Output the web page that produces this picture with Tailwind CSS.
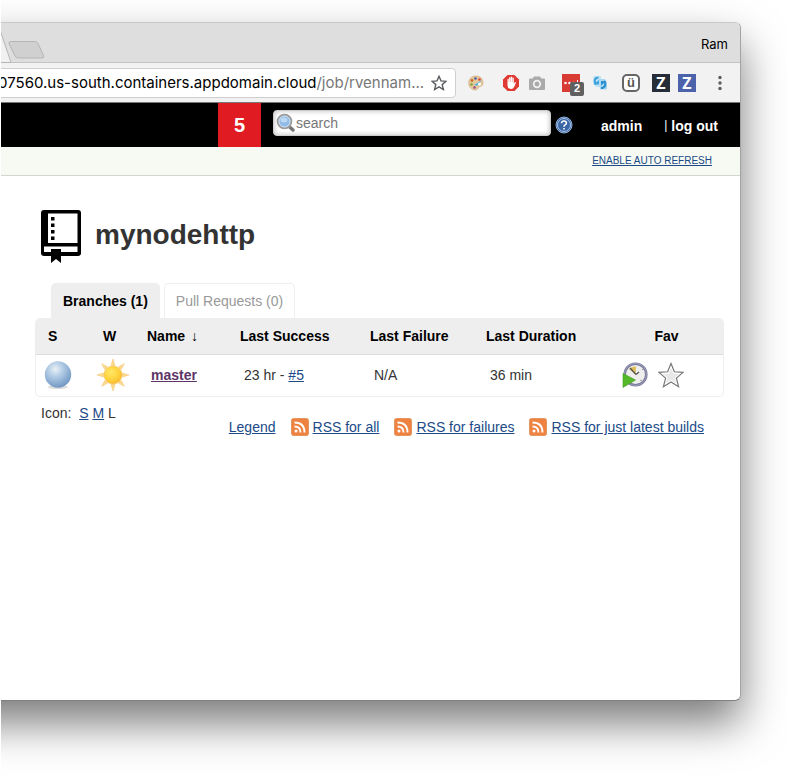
<!DOCTYPE html>
<html lang="en">
<head>
    <meta charset="UTF-8">
    <meta name="viewport" content="width=device-width, initial-scale=1.0">
    <title>mynodehttp [Jenkins]</title>
    <script src="https://cdn.jsdelivr.net/npm/@tailwindcss/browser@4"></script>
</head>
<body class="bg-white font-['Liberation_Sans',Arial,sans-serif] text-sm text-[#333]">
<div class="ml-px h-screen overflow-hidden pt-[22px] pr-[46px] pb-[74px]">
    <!-- Browser window, runs past the left edge -->
    <div class="-ml-24 flex h-full flex-col overflow-hidden rounded-md border border-l-0 border-t-[#c8c8c8] border-r-[#a3a3a3] border-b-[#808080] bg-white pl-24 shadow-[0_22px_44px_rgba(0,0,0,0.52)]">

        <!-- Tab strip -->
        <div class="-ml-24 flex h-10 shrink-0 items-center justify-between border-b border-[#c3c3c3] bg-[#dedede] pl-24">
            <svg class="h-10 w-12" viewBox="0 0 48 40" fill="none" stroke="#b5b5b5">
                <path d="M-2 4L10 39.500H-2z" fill="#f1f1f1"/>
                <path d="M9.500 18.500H34q2 0 3 2l5.500 12q1 2.500-1.500 2.500H17q-2 0-3-2L8 20.500q-.5-2 1.500-2z" fill="#d0d0d0"/>
            </svg>
            <span class="pt-1 pr-3 font-[Inter,sans-serif] text-[13px] text-black">Ram</span>
        </div>

        <!-- Address bar -->
        <div class="-ml-24 flex h-10 shrink-0 items-center border-b border-[#777] bg-[#f2f2f2] pr-4 pl-24">
            <div class="-ml-2 flex h-[30px] w-[463px] shrink-0 items-center justify-between rounded-sm border border-[#cfcfcf] bg-white pr-2 pl-1 font-[Inter,sans-serif] text-[15px] whitespace-nowrap text-black">
                <span>07560.us-south.containers.appdomain.cloud<span class="text-[#777]">/job/rvennam...</span></span>
                <svg class="size-4" viewBox="0 0 16 16" fill="none" stroke="#5a5d62" stroke-width="1.4"><path d="M8 1.300l2 4.600 5 .4-3.800 3.300 1.200 4.900L8 11.900l-4.400 2.600 1.200-4.900L1 6.300l5-.4z"/></svg>
            </div>
            <div class="flex grow items-center gap-3 pl-3">
                <svg class="size-4" viewBox="0 0 16 16">
                    <path d="M8 1C3 1 .5 4.500.7 8.500.9 12.500 4 15 7.500 15c2.500 0 2-2 3.500-3s4-.5 4-4C15 3.500 12 1 8 1z" fill="#e6c99a" stroke="#c9a878" stroke-width=".6"/>
                    <circle cx="4" cy="5.500" r="1.400" fill="#c96b2c"/><circle cx="7.500" cy="3.500" r="1.300" fill="#4a5cae"/><circle cx="11.500" cy="4.500" r="1.300" fill="#d8453c"/><circle cx="3.500" cy="9.500" r="1.300" fill="#7aa63c"/><circle cx="6.500" cy="12.500" r="1.300" fill="#a04a8a"/>
                    <path d="M14 5L6 10l3 1z" fill="#5fb3dc"/><circle cx="11.500" cy="9" r="1.500" fill="#fff"/>
                </svg>
                <div class="ml-1.5 flex items-center gap-2">
                    <svg class="size-[18px]" viewBox="0 0 18 18">
                        <path d="M5.500 1h7L17 5.500v7L12.500 17h-7L1 12.500v-7z" fill="#e03a35"/>
                        <path d="M5.500 9V5.200q.7-.9 1.300 0V8h.3V3.600q.7-.9 1.400 0V8h.3V3q.7-.8 1.400 0v5h.3V4q.7-.9 1.300 0v5.800l1-1.600q.9-.6 1.200.3l-1.600 4Q11 15 9.200 15 5.500 15 5.500 11.500z" fill="#fff"/>
                    </svg>
                    <svg class="size-[18px]" viewBox="0 0 18 18">
                        <path d="M6 2.500h6l1.300 2H16q1 0 1 1V15q0 1-1 1H2q-1 0-1-1V5.500q0-1 1-1h2.700z" fill="#aaa"/>
                        <circle cx="9" cy="10" r="3.300" fill="none" stroke="#f2f2f2" stroke-width="1.700"/>
                    </svg>
                </div>
                <div class="relative ml-1 size-[18px] bg-[#d83b34]">
                    <svg class="size-[18px]" viewBox="0 0 18 18" fill="#fff"><circle cx="3.500" cy="9" r="1.300"/><circle cx="7.500" cy="9" r="1.300"/><circle cx="11.500" cy="9" r="1.300"/><path d="M15 6h1v5h-1z"/></svg>
                    <span class="absolute top-2 left-2 flex h-[14px] w-[14px] items-center justify-center rounded-xs bg-[#606060] text-[11px] font-bold text-white">2</span>
                </div>
                <svg class="size-4" viewBox="0 0 16 16">
                    <path d="M1.500 1H9v3L6.500 6 8 9v3H4L1 8z" fill="#bfe3f6"/>
                    <path d="M7 4h6l2 4v6.500H8z" fill="#a9d8f2"/>
                    <path d="M6.500 2.500C2.500 2.500 1.500 6.500 4 9.500" fill="none" stroke="#3ea2dc" stroke-width="2.200"/>
                    <path d="M1.500 9.500H7V5z" fill="#3ea2dc"/>
                    <path d="M9 13c4.500 0 5.500-4 3-7" fill="none" stroke="#2f8fd0" stroke-width="2.200"/>
                    <path d="M14.500 6H9v4.500z" fill="#2f8fd0"/>
                </svg>
                <span class="ml-0.5 flex size-[18px] items-center justify-center rounded-[5px] border-2 border-[#666] bg-white text-[13px] leading-none font-bold text-[#555]">ü</span>
                <div class="flex gap-2">
                    <span class="flex size-[18px] items-center justify-center bg-[#252d38] font-['Open_Sans',sans-serif] text-base font-bold text-white">Z</span>
                    <span class="flex size-[18px] items-center justify-center bg-[#4c62aa] font-['Open_Sans',sans-serif] text-base font-bold text-white">Z</span>
                </div>
                <svg class="ml-auto h-4 w-2" viewBox="0 0 8 16" fill="#5a5d62"><circle cx="4" cy="2.500" r="1.700"/><circle cx="4" cy="8" r="1.700"/><circle cx="4" cy="13.500" r="1.700"/></svg>
            </div>
        </div>

        <!-- Jenkins header -->
        <header class="-ml-24 flex h-11 shrink-0 items-center justify-end bg-black pr-[22px] pl-24 font-bold text-white">
            <a href="#" class="flex h-11 w-[43px] items-center justify-center bg-[#e01b22] text-xl">5</a>
            <div class="mb-1 ml-3 flex h-[26px] w-[278px] items-center rounded-sm border border-[#ccc] bg-white shadow-[inset_0_0_5px_#bbb]">
                <svg class="ml-0.5 size-5 shrink-0" viewBox="0 0 20 20">
                    <path d="M12.500 13l4.500 4" stroke="#777" stroke-width="3.500" stroke-linecap="round"/>
                    <circle cx="8.500" cy="8.500" r="6.800" fill="#8bb4e0" stroke="#999" stroke-width="2"/>
                    <circle cx="8.500" cy="8.500" r="5.500" fill="#8fb9e6" stroke="#dbe8f5"/>
                    <ellipse cx="8" cy="7" rx="3.500" ry="2.500" fill="#bcd8f3"/>
                </svg>
                <input type="text" aria-label="Search" placeholder="search" class="min-w-0 grow text-sm font-normal text-[#333] outline-none placeholder:text-[#777]">
            </div>
            <a href="#" aria-label="Help" class="ml-1">
                <svg class="size-[18px]" viewBox="0 0 18 18">
                    <circle cx="9" cy="9" r="8" fill="#3a66a5" stroke="#8fb0dc" stroke-width="1"/>
                    <circle cx="9" cy="9" r="6.500" fill="none" stroke="#c3d5ee" stroke-width=".8"/>
                    <path d="M6.500 7.200Q6.700 5 9 5t2.400 2q0 1.200-1.300 1.900Q9 9.500 9 10.700M9 12v1.600" fill="none" stroke="#fff" stroke-width="1.600"/>
                </svg>
            </a>
            <a href="#" class="ml-7 pt-0.5">admin</a>
            <span class="ml-[22px] text-xs font-normal">|</span>
            <a href="#" class="ml-1 pt-0.5">log out</a>
        </header>
        <div class="-ml-24 flex h-[29px] shrink-0 items-center justify-end border-b border-[#d3d7cf] bg-[#f6faf2] pr-7">
            <a href="#" class="text-[10px] text-[#204a87] underline">ENABLE AUTO REFRESH</a>
        </div>

        <main class="pt-[34px] pr-4 pl-[34px]">
            <div class="flex items-start gap-3.5 pl-1.5">
                <svg class="h-[53px] w-10" viewBox="0 0 40 53">
                    <path d="M3 0h34q3 0 3 3v40q0 3-3 3H3q-3 0-3-3V3q0-3 3-3z"/>
                    <path d="M7 3.500h29.500V33H7zM3 36.500h33.500V42H20v-2H10v2H3z" fill="#fff"/>
                    <path d="M10 39h10v14l-5-4-5 4zM10 7h3.500v3.500H10zM10 13.500h3.500V17H10zM10 20h3.500v3.500H10zM10 26.500h3.500V30H10z"/>
                </svg>
                <h1 class="pt-[9px] text-[28px] leading-8 font-bold">mynodehttp</h1>
            </div>

            <div class="mt-5 flex gap-1 pl-4">
                <a href="#" class="flex h-[35px] items-center rounded-t-[5px] bg-[#eee] px-3 font-bold text-black">Branches (1)</a>
                <a href="#" class="flex h-[35px] items-center rounded-t-[5px] border border-b-0 border-[#eee] px-[11px] text-[#999]">Pull Requests (0)</a>
            </div>

            <div class="overflow-hidden rounded-[5px] border border-[#eee]">
                <table class="w-full table-fixed text-left">
                    <colgroup>
                        <col class="w-[55px]"><col class="w-11"><col class="w-[93px]"><col class="w-[130px]"><col class="w-[116px]"><col class="w-[136px]"><col>
                    </colgroup>
                    <thead>
                        <tr class="h-[35px] border-b border-[#ddd] bg-[#eee] text-black">
                            <th class="pl-3">S</th>
                            <th class="pl-3">W</th>
                            <th class="pl-3">Name <span class="pl-0.5 font-normal">↓</span></th>
                            <th class="pl-3">Last Success</th>
                            <th class="pl-3">Last Failure</th>
                            <th class="pl-3">Last Duration</th>
                            <th class="text-center">Fav</th>
                        </tr>
                    </thead>
                    <tbody>
                        <tr class="h-[42px]">
                            <td class="pl-2">
                                <svg class="size-7" viewBox="0 0 28 28" role="img" aria-label="Success">
                                    <defs><radialGradient id="ball" cx=".4" cy=".3" r=".7"><stop offset="0" stop-color="#e9f1f6"/><stop offset=".45" stop-color="#adc8e3"/><stop offset="1" stop-color="#7398c4"/></radialGradient></defs>
                                    <ellipse cx="14" cy="26" rx="10" ry="2" fill="#ddd"/>
                                    <circle cx="14" cy="13.500" r="13.200" fill="url(#ball)"/>
                                </svg>
                            </td>
                            <td class="pl-1.5">
                                <svg class="size-8" viewBox="0 0 32 32" role="img" aria-label="100%">
                                    <defs><radialGradient id="sun" cx=".4" cy=".35" r=".7"><stop offset="0" stop-color="#ffe766"/><stop offset=".6" stop-color="#ffd23c"/><stop offset="1" stop-color="#f8b62d"/></radialGradient></defs>
                                    <path d="M16 0l2 6.500h-4zM16 32l2-6.500h-4zM0 16l6.500-2v4zM32 16l-6.500-2v4zM4.700 4.700l6 3.200-2.800 2.800zM27.300 4.700l-3.200 6-2.800-2.800zM4.700 27.300l3.200-6 2.800 2.800zM27.300 27.300l-6-3.200 2.800-2.800z" fill="#fbd98c" stroke="#f6cf84" stroke-width=".7"/>
                                    <circle cx="16" cy="16" r="9" fill="url(#sun)" stroke="#f5be4a" stroke-width=".6"/>
                                </svg>
                            </td>
                            <td class="pl-4"><a href="#" class="font-bold text-[#5c3566] underline">master</a></td>
                            <td class="pl-4">23 hr - <a href="#" class="text-[#204a87] underline">#5</a></td>
                            <td class="pl-4">N/A</td>
                            <td class="pl-4">36 min</td>
                            <td class="pl-3">
                                <div class="flex items-center gap-2.5">
                                    <a href="#" aria-label="Schedule a build">
                                        <svg class="size-[26px]" viewBox="0 0 26 26">
                                            <circle cx="13.500" cy="12.500" r="10.800" fill="#eeeeec" stroke="#77779a" stroke-width="2.600"/>
                                            <circle cx="13.500" cy="12.500" r="11" fill="none" stroke="#aaaac5" stroke-width=".8"/>
                                            <path d="M13.500 12.500L7 7q3-3 7-2.500z" fill="#e0bd55"/>
                                            <path d="M8 6l6 6.500M14 12.500l3-2.500" stroke="#555" stroke-width="1.300"/>
                                            <path d="M18 18l2 1M20 8l1-1" stroke="#999"/>
                                            <path d="M1 11.500L13.500 18 1 25.500z" fill="#53b928" stroke="#3f9a20" stroke-width=".6"/>
                                        </svg>
                                    </a>
                                    <a href="#" aria-label="Favorite">
                                        <svg class="size-[26px]" viewBox="0 0 26 26">
                                            <path d="M13 1.500l3.400 8.300 8.600.6-6.600 5.700 2.200 8.600L13 20l-7.600 4.700 2.200-8.600L1 10.400l8.600-.6z" fill="#fff" stroke="#777" stroke-width="1.200"/>
                                            <path d="M13 6l2.300 5.500 5.700.5-4.400 3.800 1.500 5.500-5.100-3.200-5.100 3.200 1.500-5.500L5 12l5.700-.5z" fill="#e8e8e8"/>
                                        </svg>
                                    </a>
                                </div>
                            </td>
                        </tr>
                    </tbody>
                </table>
            </div>

            <div class="flex items-start justify-between pt-1.5 pr-5 pl-1.5 whitespace-nowrap">
                <div>Icon: &nbsp;<a href="#" class="text-[#204a87] underline">S</a> <a href="#" class="text-[#204a87] underline">M</a> L</div>
                <div class="flex gap-[15px] pt-3.5 text-[#204a87]">
                    <a href="#" class="underline">Legend</a>
                    <a href="#" class="flex items-center gap-1 underline">
                        <svg class="size-[18px]" viewBox="0 0 18 18"><rect x=".5" y=".5" width="17" height="17" rx="2" fill="#ee8240" stroke="#e59560"/><circle cx="5" cy="13" r="1.500" fill="#fff"/><path d="M3.500 8.500q6 0 6 6M3.500 4.500q10 0 10 10" fill="none" stroke="#fff" stroke-width="1.900"/></svg>
                        RSS for all
                    </a>
                    <a href="#" class="flex items-center gap-1 underline">
                        <svg class="size-[18px]" viewBox="0 0 18 18"><rect x=".5" y=".5" width="17" height="17" rx="2" fill="#ee8240" stroke="#e59560"/><circle cx="5" cy="13" r="1.500" fill="#fff"/><path d="M3.500 8.500q6 0 6 6M3.500 4.500q10 0 10 10" fill="none" stroke="#fff" stroke-width="1.900"/></svg>
                        RSS for failures
                    </a>
                    <a href="#" class="flex items-center gap-1 underline">
                        <svg class="size-[18px]" viewBox="0 0 18 18"><rect x=".5" y=".5" width="17" height="17" rx="2" fill="#ee8240" stroke="#e59560"/><circle cx="5" cy="13" r="1.500" fill="#fff"/><path d="M3.500 8.500q6 0 6 6M3.500 4.500q10 0 10 10" fill="none" stroke="#fff" stroke-width="1.900"/></svg>
                        RSS for just latest builds
                    </a>
                </div>
            </div>
        </main>
    </div>
</div>
</body>
</html>
